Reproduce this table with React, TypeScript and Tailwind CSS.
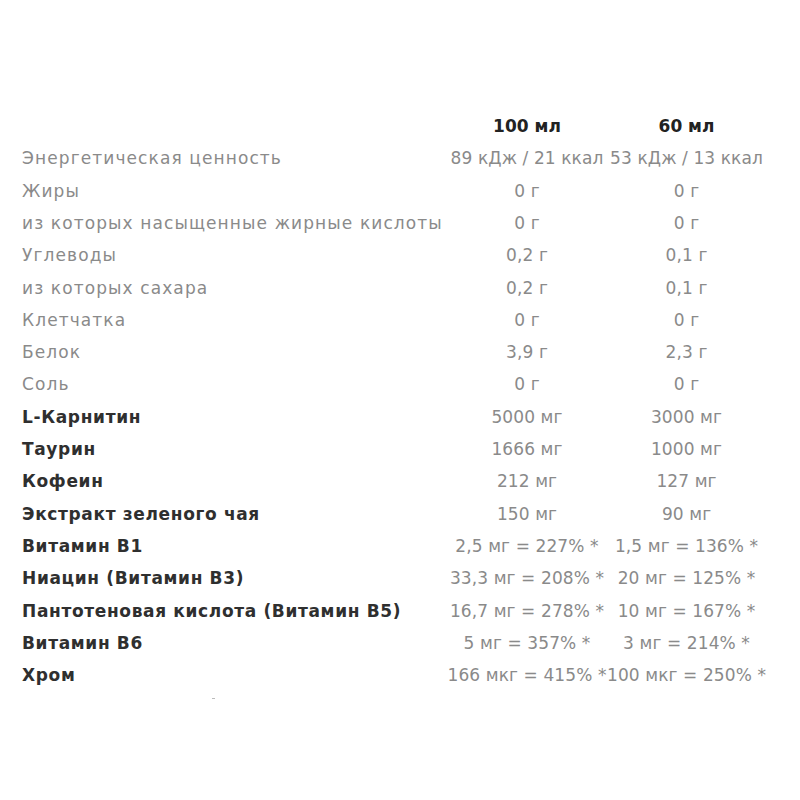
const ROWS: { label: string; a: string; b: string; bold?: boolean }[] = [
  { label: "Энергетическая ценность", a: "89 кДж / 21 ккал", b: "53 кДж / 13 ккал" },
  { label: "Жиры", a: "0 г", b: "0 г" },
  { label: "из которых насыщенные жирные кислоты", a: "0 г", b: "0 г" },
  { label: "Углеводы", a: "0,2 г", b: "0,1 г" },
  { label: "из которых сахара", a: "0,2 г", b: "0,1 г" },
  { label: "Клетчатка", a: "0 г", b: "0 г" },
  { label: "Белок", a: "3,9 г", b: "2,3 г" },
  { label: "Соль", a: "0 г", b: "0 г" },
  { label: "L-Карнитин", a: "5000 мг", b: "3000 мг", bold: true },
  { label: "Таурин", a: "1666 мг", b: "1000 мг", bold: true },
  { label: "Кофеин", a: "212 мг", b: "127 мг", bold: true },
  { label: "Экстракт зеленого чая", a: "150 мг", b: "90 мг", bold: true },
  { label: "Витамин B1", a: "2,5 мг = 227% *", b: "1,5 мг = 136% *", bold: true },
  { label: "Ниацин (Витамин B3)", a: "33,3 мг = 208% *", b: "20 мг = 125% *", bold: true },
  { label: "Пантотеновая кислота (Витамин B5)", a: "16,7 мг = 278% *", b: "10 мг = 167% *", bold: true },
  { label: "Витамин B6", a: "5 мг = 357% *", b: "3 мг = 214% *", bold: true },
  { label: "Хром", a: "166 мкг = 415% *", b: "100 мкг = 250% *", bold: true },
];

export default function App() {
  return (
    <div className="w-[800px] h-[800px] bg-white pt-[111px] pl-[22px] font-['DejaVu_Sans',sans-serif] text-[17px]">
      <table className="border-collapse">
        <thead>
          <tr className="h-[32px]">
            <th className="w-[425px]"></th>
            <th className="w-[160px] text-center font-bold text-[#222]">100 мл</th>
            <th className="w-[153px] text-center font-bold text-[#222]">60 мл</th>
          </tr>
        </thead>
        <tbody>
          {ROWS.map((r) => (
            <tr key={r.label} className="h-[32.3px]">
              <td
                className={
                  r.bold
                    ? "font-bold text-[#2f2f2f] tracking-[0.65px] whitespace-nowrap"
                    : "text-[#8a8a8a] tracking-[1.1px] whitespace-nowrap"
                }
              >
                {r.label}
              </td>
              <td className="text-center text-[#8a8a8a] tracking-[0.1px] whitespace-nowrap">{r.a}</td>
              <td className="text-center text-[#8a8a8a] tracking-[0.1px] whitespace-nowrap">{r.b}</td>
            </tr>
          ))}
        </tbody>
      </table>
      <div className="ml-[190px] mt-[6px] w-[3px] h-[1px] bg-[#bbb]"></div>
    </div>
  );
}
